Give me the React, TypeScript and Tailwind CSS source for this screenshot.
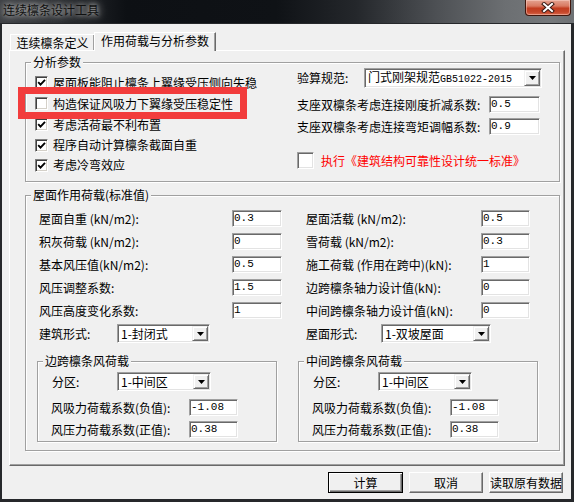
import React from "react";

function CheckBox({ checked = false }: { checked?: boolean }) {
  return (
    <span className="box-border flex h-[13px] w-[13px] shrink-0 items-center justify-center border border-t-[#808080] border-l-[#808080] border-b-white border-r-white bg-white shadow-[inset_1px_1px_0_#404040,inset_-1px_-1px_0_#d4d0c8]">
      {checked && (
        <svg width="9" height="9" viewBox="0 0 9 9">
          <path d="M1.2 4.2 L3.5 6.6 L8 1.8" fill="none" stroke="#000" strokeWidth="1.9" />
        </svg>
      )}
    </span>
  );
}

function Field({ value, className = "" }: { value: string; className?: string }) {
  return (
    <div
      className={`box-border flex h-[17px] shrink-0 items-center border border-t-[#a0a0a0] border-l-[#a0a0a0] border-b-white border-r-white bg-white pl-[1px] font-['Liberation_Mono',monospace] text-[11px] leading-none text-black shadow-[inset_1px_1px_0_#696969,inset_-1px_-1px_0_#e3e3e3] ${className}`}
    >
      {value}
    </div>
  );
}

function Combo({ value, className = "" }: { value: React.ReactNode; className?: string }) {
  return (
    <div
      className={`box-border flex h-[19px] shrink-0 items-center border border-t-[#a0a0a0] border-l-[#a0a0a0] border-b-white border-r-white bg-white p-[1px] shadow-[inset_1px_1px_0_#696969,inset_-1px_-1px_0_#e3e3e3] ${className}`}
    >
      <span className="min-w-0 flex-1 whitespace-nowrap pl-[2px] text-[12px] leading-[16px]">{value}</span>
      <span className="box-border flex h-full w-[16px] shrink-0 items-center justify-center border border-t-[#f0f0f0] border-l-[#f0f0f0] border-b-[#696969] border-r-[#696969] bg-[#f0f0f0] shadow-[inset_1px_1px_0_#fff,inset_-1px_-1px_0_#a0a0a0]">
        <svg width="7" height="4" viewBox="0 0 7 4">
          <path d="M0 0H7L3.5 4Z" fill="#000" />
        </svg>
      </span>
    </div>
  );
}

function Group({
  title,
  className = "",
  children,
}: {
  title: string;
  className?: string;
  children?: React.ReactNode;
}) {
  return (
    <div
      className={`relative box-border shrink-0 border border-[#a0a0a0] shadow-[1px_1px_0_#fff,inset_1px_1px_0_#fff] ${className}`}
    >
      <span className="absolute left-[5px] top-[-9px] whitespace-nowrap bg-[#f0f0f0] px-[2px] text-[12px] leading-[16px]">
        {title}
      </span>
      {children}
    </div>
  );
}

function Btn({ label, def = false, className = "" }: { label: string; def?: boolean; className?: string }) {
  return (
    <div
      className={`box-border flex h-[21px] shrink-0 items-center justify-center text-[12px] leading-[16px] ${
        def
          ? "border border-black shadow-[inset_1px_1px_0_#fff,inset_-1px_-1px_0_#696969,inset_-2px_-2px_0_#a0a0a0]"
          : "border border-t-white border-l-white border-b-[#696969] border-r-[#696969] shadow-[inset_-1px_-1px_0_#a0a0a0]"
      } ${className}`}
    >
      {label}
    </div>
  );
}

function CheckRow({ checked, label, h }: { checked?: boolean; label: string; h: string }) {
  return (
    <div className={`flex items-center gap-[5px] ${h}`}>
      <CheckBox checked={checked} />
      <span className="whitespace-nowrap leading-[16px]">{label}</span>
    </div>
  );
}

function LRow({ label, value, fw }: { label: string; value: string; fw: string }) {
  return (
    <div className="flex h-[23px] items-center justify-between">
      <span className="whitespace-nowrap leading-[16px]">{label}</span>
      <Field value={value} className={fw} />
    </div>
  );
}

function WindGroup({ title }: { title: string }) {
  return (
    <Group title={title} className="h-[81px] w-[240px]">
      <div className="flex flex-col pl-[13px] pt-[10px]">
        <div className="flex h-[19px] items-center">
          <span className="w-[66px] whitespace-nowrap pl-[1px] leading-[16px]">分区:</span>
          <Combo value="1-中间区" className="w-[94px]" />
        </div>
        <div className="mt-[8px] flex h-[17px] items-center">
          <span className="w-[138px] whitespace-nowrap leading-[16px]">风吸力荷载系数(负值):</span>
          <Field value="-1.08" className="w-[49px]" />
        </div>
        <div className="mt-[5px] flex h-[17px] items-center">
          <span className="w-[138px] whitespace-nowrap leading-[16px]">风压力荷载系数(正值):</span>
          <Field value="0.38" className="w-[49px]" />
        </div>
      </div>
    </Group>
  );
}

export default function App() {
  return (
    <div className="flex h-[502px] w-[574px] flex-col overflow-hidden bg-[#6a6d70] font-['Noto_Sans_CJK_SC','Noto_Sans',sans-serif] text-[12px] text-black">
      {/* Title bar */}
      <div className="flex h-[23px] shrink-0 items-start justify-between bg-[linear-gradient(90deg,#3e4145_0%,#2a2d31_10%,#0d1014_22%,#0f1216_48%,#24272b_62%,#4d5054_76%,#6c6f72_88%,#75787b_96%,#6e7174_100%)]">
        <span className="ml-[3px] mt-[2px] whitespace-nowrap text-[12px] leading-[16px] text-[#101010] [text-shadow:0_0_4px_#b8b8b8,0_0_8px_#a0a0a0,0_0_12px_#8a8a8a]">
          连续檩条设计工具
        </span>
        <div className="mr-[3px] flex h-[16px] w-[46px] items-center justify-center rounded-b-[4px] border border-t-0 border-[#40160c] bg-[linear-gradient(180deg,#e4a391_0%,#d97a62_40%,#c23d20_55%,#c5462a_80%,#d9694c_100%)] shadow-[inset_0_0_0_1px_rgba(255,220,210,0.45)]">
          <svg width="14" height="11" viewBox="0 0 14 11">
            <path d="M3 2 L11 9 M11 2 L3 9" stroke="#3a1a14" strokeWidth="4" strokeLinecap="square" />
            <path d="M3 2 L11 9 M11 2 L3 9" stroke="#fff" strokeWidth="2" strokeLinecap="square" />
          </svg>
        </div>
      </div>

      {/* Client area */}
      <div className="box-border flex flex-1 flex-col border-b-[3px] border-l-2 border-r-[3px] border-t border-[#26282b] bg-[#f0f0f0]">
        {/* Tabs */}
        <div className="mt-[8px] flex h-[18px] items-end pl-[8px]">
          <div className="box-border flex h-[16px] w-[84px] items-center justify-center border-l border-t border-l-white border-t-white shadow-[inset_-1px_0_0_#a0a0a0]">
            <span className="whitespace-nowrap leading-[16px]">连续檩条定义</span>
          </div>
          <div className="relative z-10 mb-[-1px] box-border flex h-[19px] w-[122px] items-start justify-center border-l border-r border-t border-l-white border-t-white border-r-[#696969] bg-[#f0f0f0] shadow-[inset_-1px_0_0_#a0a0a0]">
            <span className="whitespace-nowrap leading-[16px]">作用荷载与分析参数</span>
          </div>
        </div>

        {/* Tab panel */}
        <div className="ml-[7px] mr-[6px] box-border flex h-[416px] flex-col border border-b-[#696969] border-l-white border-r-[#696969] border-t-white shadow-[inset_-1px_-1px_0_#a0a0a0]">
          {/* Group 1 */}
          <Group title="分析参数" className="ml-[15px] mt-[11px] h-[120px] w-[535px]">
            <div className="flex">
              <div className="flex w-[271px] flex-col pl-[9px] pt-[9px]">
                <CheckRow checked h="h-[21px]" label="屋面板能阻止檩条上翼缘受压侧向失稳" />
                <CheckRow h="h-[21px]" label="构造保证风吸力下翼缘受压稳定性" />
                <CheckRow checked h="h-[21px]" label="考虑活荷最不利布置" />
                <CheckRow checked h="h-[20px]" label="程序自动计算檩条截面自重" />
                <CheckRow checked h="h-[20px]" label="考虑冷弯效应" />
              </div>
              <div className="flex flex-col pt-[5px]">
                <div className="flex h-[20px] items-center">
                  <span className="w-[67px] whitespace-nowrap leading-[16px]">验算规范:</span>
                  <Combo
                    value={
                      <>
                        门式刚架规范<span className="font-['Liberation_Mono',monospace] text-[10px]">GB51022-2015</span>
                      </>
                    }
                    className="h-[20px] w-[178px]"
                  />
                </div>
                <div className="mt-[8px] flex h-[17px] items-center">
                  <span className="w-[192px] whitespace-nowrap leading-[16px]">支座双檩条考虑连接刚度折减系数:</span>
                  <Field value="0.5" className="w-[51px]" />
                </div>
                <div className="mt-[5px] flex h-[17px] items-center">
                  <span className="w-[192px] whitespace-nowrap leading-[16px]">支座双檩条考虑连接弯矩调幅系数:</span>
                  <Field value="0.9" className="w-[51px]" />
                </div>
                <div className="mt-[17px] flex h-[17px] items-center gap-[7px]">
                  <span className="box-border h-[17px] w-[17px] shrink-0 border border-t-[#a0a0a0] border-l-[#a0a0a0] border-b-white border-r-white bg-white shadow-[inset_1px_1px_0_#696969,inset_-1px_-1px_0_#e3e3e3]" />
                  <span className="whitespace-nowrap leading-[16px] text-[#ff0000]">执行《建筑结构可靠性设计统一标准》</span>
                </div>
              </div>
            </div>
            {/* highlight rectangle overlay */}
            <div className="pointer-events-none absolute left-[-8px] top-[24px] z-20 box-border h-[32px] w-[229px] border-[7px] border-[#f23c3c]" />
          </Group>

          {/* Group 2 */}
          <Group title="屋面作用荷载(标准值)" className="ml-[15px] mt-[13px] h-[256px] w-[535px]">
            <div className="flex pt-[11px]">
              <div className="ml-[13px] flex w-[243px] flex-col">
                <LRow label="屋面自重 (kN/m2):" value="0.3" fw="w-[50px]" />
                <LRow label="积灰荷载 (kN/m2):" value="0" fw="w-[50px]" />
                <LRow label="基本风压值(kN/m2):" value="0.5" fw="w-[50px]" />
                <LRow label="风压调整系数:" value="1.5" fw="w-[50px]" />
                <LRow label="风压高度变化系数:" value="1" fw="w-[50px]" />
                <div className="flex h-[23px] items-center">
                  <span className="w-[78px] whitespace-nowrap leading-[16px]">建筑形式:</span>
                  <Combo value="1-封闭式" className="w-[93px]" />
                </div>
              </div>
              <div className="ml-[24px] flex w-[224px] flex-col">
                <LRow label="屋面活载 (kN/m2):" value="0.5" fw="w-[49px]" />
                <LRow label="雪荷载 (kN/m2):" value="0.3" fw="w-[49px]" />
                <LRow label="施工荷载 (作用在跨中)(kN):" value="1" fw="w-[49px]" />
                <LRow label="边跨檩条轴力设计值(kN):" value="0" fw="w-[49px]" />
                <LRow label="中间跨檩条轴力设计值(kN):" value="0" fw="w-[49px]" />
                <div className="flex h-[23px] items-center">
                  <span className="w-[75px] whitespace-nowrap leading-[16px]">屋面形式:</span>
                  <Combo value="1-双坡屋面" className="w-[110px]" />
                </div>
              </div>
            </div>
            <div className="mt-[16px] flex gap-[21px] pl-[11px]">
              <WindGroup title="边跨檩条风荷载" />
              <WindGroup title="中间跨檩条风荷载" />
            </div>
          </Group>
        </div>

        {/* Buttons */}
        <div className="mt-[6px] flex justify-end gap-[6px] pr-[8px]">
          <Btn label="计算" def className="w-[75px]" />
          <Btn label="取消" className="w-[74px]" />
          <Btn label="读取原有数据" className="w-[74px]" />
        </div>
      </div>
    </div>
  );
}
